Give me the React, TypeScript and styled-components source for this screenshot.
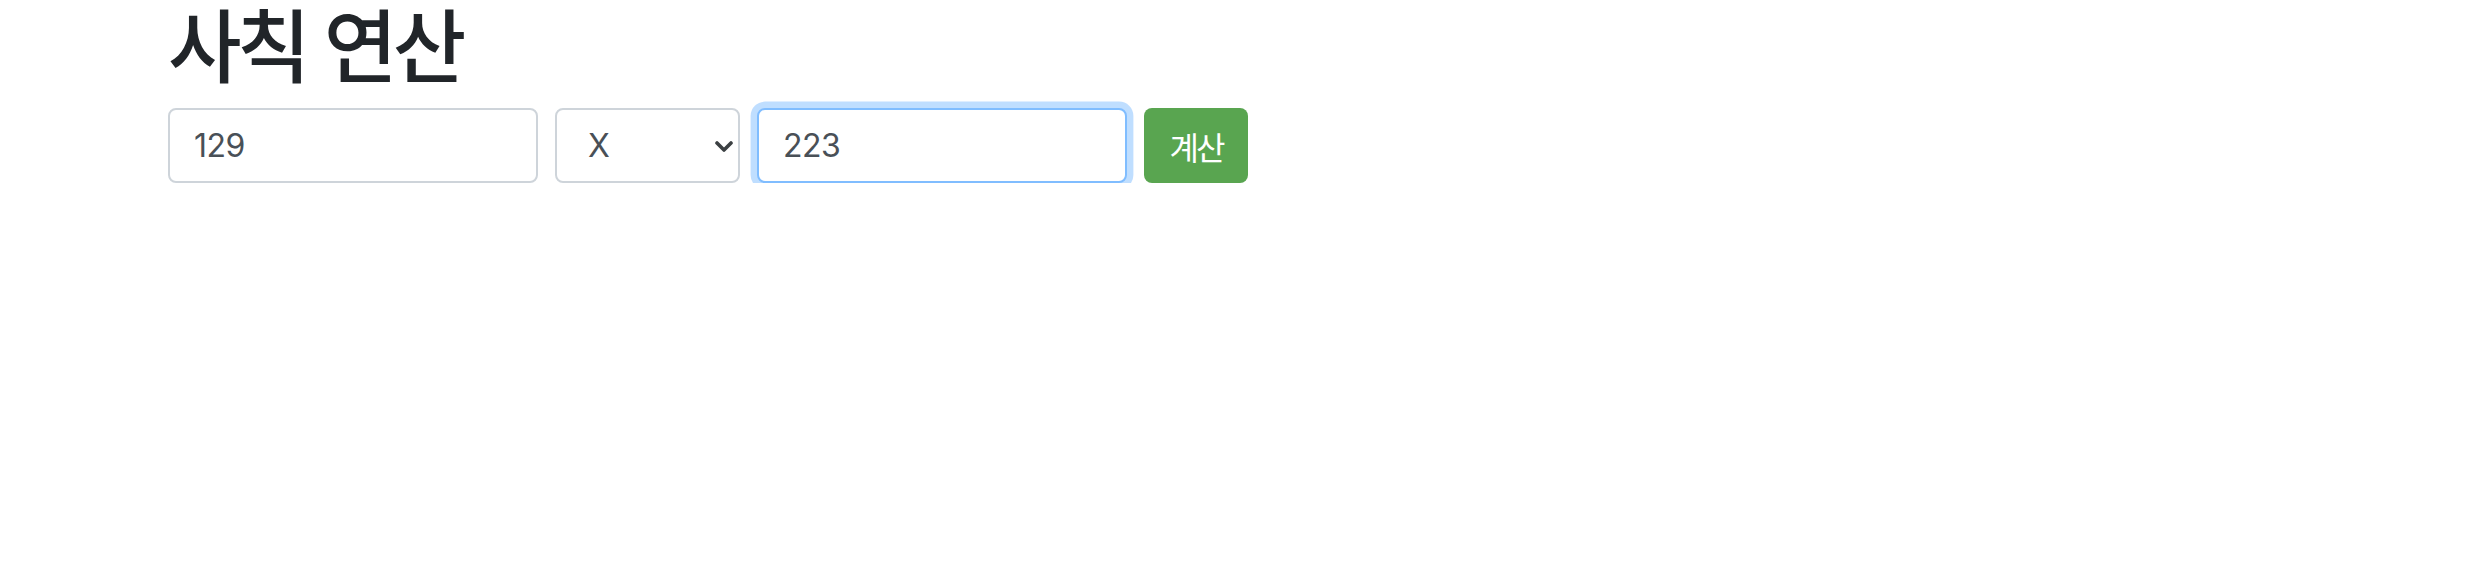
import React, { useState } from "react";
import styled, { createGlobalStyle } from "styled-components";

const Global = createGlobalStyle`
  html, body { margin: 0; padding: 0; background: #fff; }
  body { font-family: Inter, "Noto Sans CJK KR", sans-serif; }
  * { box-sizing: border-box; }
`;

const Page = styled.div`
  padding: 0 0 0 168px;
`;

const Title = styled.h1`
  margin: 0 0 26px 0;
  font-family: "Noto Sans CJK KR", sans-serif;
  font-weight: 500;
  font-size: 80px;
  line-height: 82px;
  letter-spacing: -4.5px;
  word-spacing: 4px;
  color: #212529;
  white-space: nowrap;
`;

const Form = styled.form`
  display: flex;
  align-items: center;
  gap: 17px;
`;

const TextInput = styled.input<{ $focused?: boolean }>`
  width: 370px;
  height: 75px;
  padding: 0 24px;
  border: 2px solid ${(p) => (p.$focused ? "#80bdff" : "#ced4da")};
  border-radius: 8px;
  font-family: Inter, sans-serif;
  font-size: 32px;
  letter-spacing: -0.5px;
  color: #495057;
  background: #fff;
  outline: none;
  box-shadow: ${(p) => (p.$focused ? "0 0 0 6.4px rgba(0, 123, 255, 0.25)" : "none")};
`;

const SelectWrap = styled.div`
  position: relative;
  width: 185px;
  height: 75px;
`;

const Select = styled.select`
  appearance: none;
  -webkit-appearance: none;
  width: 100%;
  height: 100%;
  padding: 0 40px 0 31px;
  border: 2px solid #ced4da;
  border-radius: 8px;
  font-family: Inter, sans-serif;
  font-size: 32px;
  color: #495057;
  background: #fff;
  outline: none;
`;

const Chevron = styled.svg`
  position: absolute;
  right: 6px;
  top: 50%;
  width: 20px;
  height: 12px;
  margin-top: -5px;
  pointer-events: none;
`;

const Button = styled.button`
  width: 104px;
  height: 75px;
  border: none;
  border-radius: 8px;
  background: #59a550;
  color: #fff;
  font-family: "Noto Sans CJK KR", sans-serif;
  font-size: 32px;
  letter-spacing: -3px;
  font-weight: 400;
  padding: 0;
  cursor: pointer;
`;

export default function App() {
  const [a, setA] = useState("129");
  const [op, setOp] = useState("X");
  const [b, setB] = useState("223");
  return (
    <>
      <Global />
      <Page>
        <Title>사칙 연산</Title>
        <Form onSubmit={(e) => e.preventDefault()}>
          <TextInput value={a} onChange={(e) => setA(e.target.value)} />
          <SelectWrap>
            <Select value={op} onChange={(e) => setOp(e.target.value)}>
              <option value="+">+</option>
              <option value="-">-</option>
              <option value="X">X</option>
              <option value="/">/</option>
            </Select>
            <Chevron viewBox="0 0 20 12">
              <path d="M3 2 L10 9 L17 2" fill="none" stroke="#3c4043" strokeWidth="3.6" strokeLinecap="round" strokeLinejoin="round" />
            </Chevron>
          </SelectWrap>
          <TextInput $focused value={b} onChange={(e) => setB(e.target.value)} />
          <Button type="submit">계산</Button>
        </Form>
      </Page>
    </>
  );
}
